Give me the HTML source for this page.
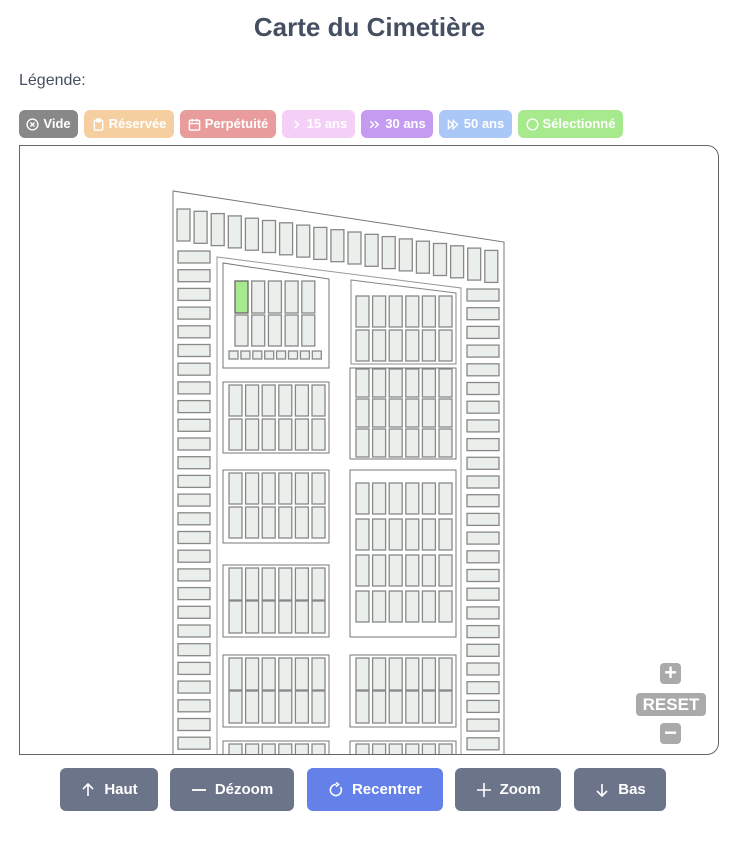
<!DOCTYPE html>
<html style="overflow:hidden;width:741px;height:850px"><head><meta charset="utf-8"><style>
body{margin:0;width:741px;height:850px;background:#fff;font-family:"Liberation Sans",sans-serif;position:relative;overflow:hidden}
h1{position:absolute;top:12px;left:0;width:739px;text-align:center;margin:0;font-size:26px;color:#454f62;font-weight:bold}
.leg{position:absolute;left:19px;top:72px;font-size:16px;color:#454f62}
.chip{position:absolute;top:110px;height:28px;border-radius:6px;color:#fff;font-weight:bold;font-size:13px;line-height:28px;display:flex;align-items:center;justify-content:center;gap:4px}
.chip svg{width:13px;height:13px}
.map{position:absolute;left:19px;top:145px;width:698px;height:608px;border:1px solid #666;border-radius:0 12px 12px 0;overflow:hidden}
.btn{position:absolute;top:768px;height:43px;border-radius:6px;background:#6b7489;color:#fff;font-weight:bold;font-size:15px;display:flex;align-items:center;justify-content:center;gap:8px}
.btn svg{width:16px;height:16px}
.zc{position:absolute;background:#aaa;border-radius:4px;color:#fff;font-weight:bold;text-align:center}
</style></head><body>
<h1>Carte du Cimetière</h1>
<div class="leg">Légende:</div>
<div class="chip" style="left:19px;width:59px;background:#888"><svg viewBox="0 0 14 14" fill="none" stroke="#fff" stroke-width="1.5"><circle cx="7" cy="7" r="5.8"/><path d="M4.8 4.8l4.4 4.4M9.2 4.8l-4.4 4.4"/></svg>Vide</div>
<div class="chip" style="left:84px;width:90px;background:#f5cf9f"><svg viewBox="0 0 14 14" fill="none" stroke="#fff" stroke-width="1.5"><rect x="2.5" y="2.5" width="9" height="10.5" rx="1"/><rect x="5" y="1" width="4" height="3" rx=".5"/></svg>Réservée</div>
<div class="chip" style="left:180px;width:96px;background:#e99c9c"><svg viewBox="0 0 14 14" fill="none" stroke="#fff" stroke-width="1.5"><rect x="1.5" y="2.5" width="11" height="10.5" rx="1"/><path d="M1.5 6h11M4.5 1v3M9.5 1v3"/></svg>Perpétuité</div>
<div class="chip" style="left:282px;width:73px;background:#f4d0f7"><svg viewBox="0 0 14 14" fill="none" stroke="#fff" stroke-width="1.6"><path d="M5 3l4 4-4 4"/></svg>15 ans</div>
<div class="chip" style="left:361px;width:72px;background:#c59bf2"><svg viewBox="0 0 14 14" fill="none" stroke="#fff" stroke-width="1.6"><path d="M2.5 3.5l3.5 3.5-3.5 3.5M7.5 3.5l3.5 3.5-3.5 3.5"/></svg>30 ans</div>
<div class="chip" style="left:439px;width:73px;background:#a9c8f7"><svg viewBox="0 0 14 14" fill="none" stroke="#fff" stroke-width="1.4"><path d="M1.5 2.5l5 4.5-5 4.5zM6.5 2.5l5 4.5-5 4.5z"/></svg>50 ans</div>
<div class="chip" style="left:518px;width:105px;background:#a6ea8d"><svg viewBox="0 0 14 14" fill="none" stroke="#fff" stroke-width="1.5"><circle cx="7" cy="7" r="5.8"/></svg>Sélectionné</div>
<div class="map"></div>
<svg id="m" width="741" height="760" style="position:absolute;left:0;top:0" viewBox="0 0 741 760">
<defs><clipPath id="c"><rect x="20" y="146" width="697" height="608"/></clipPath></defs>
<g id="g" clip-path="url(#c)" fill="none" stroke="#777" stroke-width="1">
<path d="M173 900V191L504 242V900"/>
<path d="M217 900V257L461 288V900" stroke="#999"/>
</g></svg>
<div class="zc" style="left:660px;top:663px;width:21px;height:21px;font-size:22px;line-height:20px">+</div>
<div class="zc" style="left:636px;top:693px;width:70px;height:23px;font-size:17px;line-height:23px">RESET</div>
<div class="zc" style="left:660px;top:723px;width:21px;height:21px;font-size:22px;line-height:19px">−</div>
<div class="btn" style="left:60px;width:98px"><svg viewBox="0 0 16 16" fill="none" stroke="#fff" stroke-width="1.6"><path d="M8 14V2M3 7l5-5 5 5"/></svg>Haut</div>
<div class="btn" style="left:170px;width:124px"><svg viewBox="0 0 16 16" fill="none" stroke="#fff" stroke-width="1.8"><path d="M1 8h14"/></svg>Dézoom</div>
<div class="btn" style="left:307px;width:136px;background:#6381e8"><svg viewBox="0 0 16 16" fill="none" stroke="#fff" stroke-width="1.6"><path d="M12.5 5A5.5 5.5 0 1 1 8 2.5M8 0.5L10.5 2.5 8 4.5"/></svg>Recentrer</div>
<div class="btn" style="left:455px;width:106px"><svg viewBox="0 0 16 16" fill="none" stroke="#fff" stroke-width="1.6"><path d="M8 1v14M1 8h14"/></svg>Zoom</div>
<div class="btn" style="left:574px;width:92px"><svg viewBox="0 0 16 16" fill="none" stroke="#fff" stroke-width="1.6"><path d="M8 2v12M3 9l5 5 5-5"/></svg>Bas</div>
<script>
var g=document.getElementById('g'),ns='http://www.w3.org/2000/svg';
function r(x,y,w,h,f,s){var e=document.createElementNS(ns,'rect');e.setAttribute('x',x);e.setAttribute('y',y);e.setAttribute('width',w);e.setAttribute('height',h);e.setAttribute('fill',f||'#ebefeb');e.setAttribute('stroke',s||'#888');e.setAttribute('stroke-width','1.3');g.appendChild(e);}
function box(x,y,w,h){var e=document.createElementNS(ns,'rect');e.setAttribute('x',x);e.setAttribute('y',y);e.setAttribute('width',w);e.setAttribute('height',h);e.setAttribute('fill','#fff');e.setAttribute('stroke','#777');g.appendChild(e);}
for(var i=0;i<19;i++){var x=177+i*17.1,y=209+i*2.3;r(x,y,13,32);}
for(var y=251;y<760;y+=18.7){r(178,y,32,12);}
for(var y=289;y<760;y+=18.7){r(467,y,32,12);}
var p=document.createElementNS(ns,'path');p.setAttribute('d','M223 368V263L329 279V368Z');p.setAttribute('fill','#fff');p.setAttribute('stroke','#777');g.appendChild(p);
for(var c=0;c<5;c++){r(235+c*16.7,281,13,32,c==0?'#a6ea8d':null,c==0?'#666':null);r(235+c*16.7,315,13,31);}
for(var c=0;c<8;c++)r(229+c*11.9,351,9,8);
var p2=document.createElementNS(ns,'path');p2.setAttribute('d','M351 364V280L456 293V364Z');p2.setAttribute('fill','#fff');p2.setAttribute('stroke','#888');g.appendChild(p2);
function six(x0,ys,h){for(var k=0;k<ys.length;k++)for(var c=0;c<6;c++)r(x0+c*16.6,ys[k],13,h);}
six(356,[296,330],31);
box(223,382,106,71);six(229,[385,419],31);
box(350,368,106,91);six(356,[369,399,429],28);
box(223,470,106,73);six(229,[473,507],31);
box(350,470,106,167);six(356,[483,519,555,591],31);
box(223,565,106,72);six(229,[568,601],32);
box(223,655,106,72);six(229,[658,691],32);
box(350,655,106,72);six(356,[658,691],32);
box(223,741,106,72);six(229,[744],32);
box(350,741,106,72);six(356,[744],32);
</script>
</body></html>
